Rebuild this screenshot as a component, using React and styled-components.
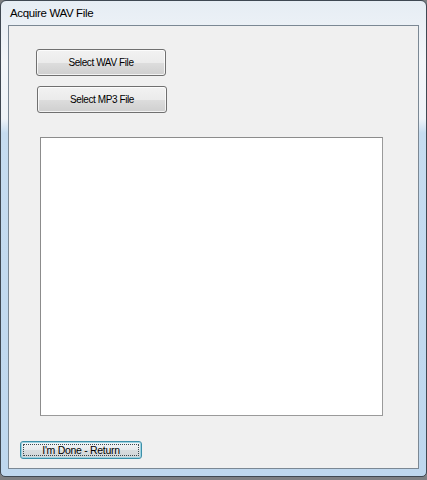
import React from "react";
import styled, { createGlobalStyle } from "styled-components";

const Global = createGlobalStyle`
  html, body { margin: 0; padding: 0; }
  body { width: 427px; height: 480px; background: #7d7f82; overflow: hidden; }
`;

const Window = styled.div`
  box-sizing: border-box;
  width: 427px;
  height: 477px;
  border: 1px solid #3f4852;
  border-radius: 6px 6px 5px 5px;
  background: linear-gradient(
    to bottom,
    #e6edf4 0px,
    #f3f6f9 60px,
    #eef3f8 118px,
    #c6dcf0 132px,
    #bed7ee 100%
  );
  display: flex;
  flex-direction: column;
  padding: 0 7px 7px 7px;
`;

const TitleBar = styled.div`
  height: 24px;
  display: flex;
  align-items: center;
  padding-left: 2px;
  font-family: "Liberation Sans", Arial, sans-serif;
  font-size: 11.5px;
  letter-spacing: -0.35px;
  color: #000;
`;

const Client = styled.div`
  flex: 1;
  box-sizing: border-box;
  border: 1px solid #7b8894;
  background: #f0f0f0;
  display: flex;
  flex-direction: column;
  align-items: flex-start;
`;

const Item = styled.div`
  margin-left: ${(p) => p.$left}px;
  margin-top: ${(p) => p.$top}px;
`;

const Button = styled.button`
  box-sizing: border-box;
  width: ${(p) => p.$w}px;
  height: ${(p) => p.$h}px;
  padding: 0;
  border: 1px solid #707070;
  border-radius: 3px;
  background: linear-gradient(
    to bottom,
    #f2f2f2 0%,
    #ebebeb 50%,
    #dddddd 51%,
    #cfcfcf 100%
  );
  box-shadow: inset 0 0 0 1px rgba(255, 255, 255, 0.75);
  font-family: "Liberation Sans", Arial, sans-serif;
  font-size: 10px;
  letter-spacing: -0.4px;
  color: #000;
  display: flex;
  align-items: center;
  justify-content: center;
`;

const FocusButton = styled(Button)`
  border: 1px solid #3c8fa8;
  background: linear-gradient(to bottom, #f4f6f7 0%, #e6e9eb 50%, #d8dcde 51%, #d2d6d8 100%);
  box-shadow: inset 0 0 0 1px #9cd3e2;
  font-size: 10.5px;
  letter-spacing: -0.3px;
  position: relative;
  &::after {
    content: "";
    position: absolute;
    inset: 2px;
    border: 1px dotted #3b4a50;
    border-radius: 1px;
  }
`;

const ListBox = styled.div`
  box-sizing: border-box;
  width: 343px;
  height: 279px;
  background: #fff;
  border: 1px solid #9a9a9a;
  border-top-color: #8c8c8c;
  border-left-color: #8c8c8c;
`;

export default function App() {
  return (
    <>
      <Global />
      <Window>
        <TitleBar>Acquire WAV File</TitleBar>
        <Client>
          <Item $left={27} $top={23}>
            <Button $w={130} $h={27}>Select WAV File</Button>
          </Item>
          <Item $left={28} $top={10}>
            <Button $w={130} $h={27}>Select MP3 File</Button>
          </Item>
          <Item $left={31} $top={24}>
            <ListBox />
          </Item>
          <Item $left={11} $top={25}>
            <FocusButton $w={122} $h={18}>I'm Done - Return</FocusButton>
          </Item>
        </Client>
      </Window>
    </>
  );
}
